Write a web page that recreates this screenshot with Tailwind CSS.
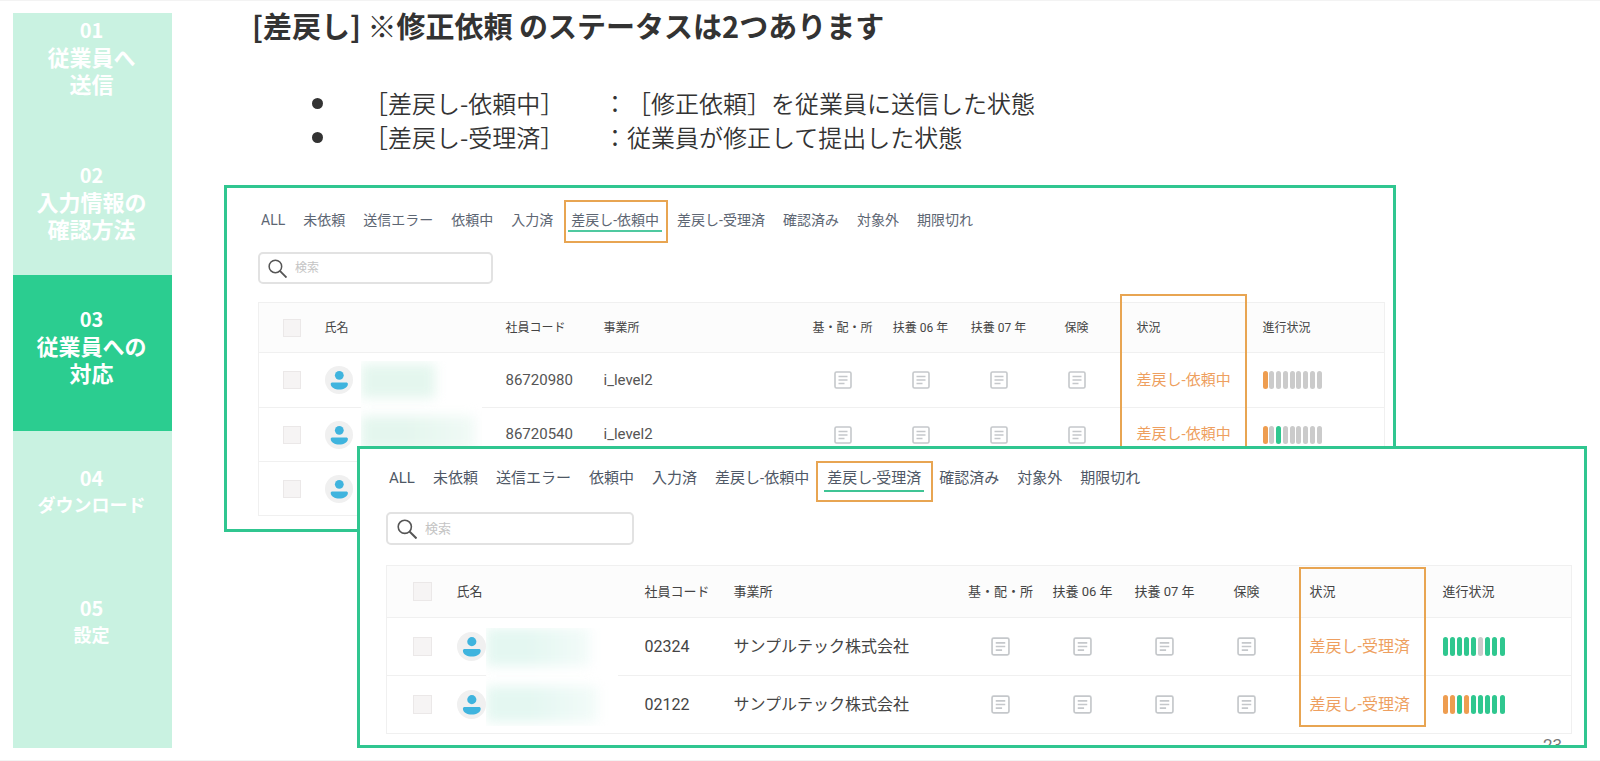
<!DOCTYPE html>
<html lang="ja">
<head>
  <meta charset="UTF-8">
  <meta name="viewport" content="width=device-width, initial-scale=1.0">
  <title>差戻しのステータス</title>
  <script src="https://cdn.jsdelivr.net/npm/@tailwindcss/browser@4"></script>
  <style>
    body { font-family: Roboto, "Noto Sans CJK JP", sans-serif; }
    .jp { font-family: "Noto Sans CJK JP", sans-serif; text-spacing-trim: space-all; }
  </style>
</head>
<body class="bg-white text-[#333]">
  <!-- アイコン定義 -->
  <svg class="hidden">
    <symbol id="doc" viewBox="0 0 18 18">
      <rect x="1" y="1" width="16" height="16" rx="1.5" fill="#fff" stroke="#c5c8cb" stroke-width="1.6"/>
      <path d="M4.5 5.5h9M4.5 9h9M4.5 12.5h6" stroke="#c5c8cb" stroke-width="1.6" fill="none"/>
    </symbol>
    <symbol id="user" viewBox="0 0 28 28">
      <circle cx="14" cy="14" r="14" fill="#f0f0f0"/>
      <circle cx="14.3" cy="9.3" r="4.4" fill="#3fb4de"/>
      <path d="M5.7 18c0-1 .7-1.500 1.800-1.500h13.600c1.100 0 1.800.5 1.800 1.500 0 3.400-4.200 5.600-8.600 5.600s-8.600-2.200-8.600-5.600z" fill="#3fb4de"/>
    </symbol>
    <symbol id="search" viewBox="0 0 20 20">
      <circle cx="7.800" cy="7.800" r="6.600" fill="none" stroke="#555" stroke-width="1.600"/>
      <path d="M12.500 12.500l7 7" stroke="#555" stroke-width="2" fill="none"/>
    </symbol>
  </svg>

  <div class="flex min-h-screen border-y border-[#f3f3f3] pt-3 pr-[13px] pb-3 pl-[13px]">
    <nav class="jp flex w-[159px] shrink-0 flex-col bg-[#c9f2e1] text-center text-[22px] leading-[27px] font-bold text-white">
      <a href="#s1" class="block h-[142px] pt-[3px] pr-[2px]"><span class="block text-[20px]">01</span>従業員へ<br>送信</a>
      <a href="#s2" class="block h-[120px] pt-[6px] pr-[2px]"><span class="block text-[20px]">02</span>入力情報の<br>確認方法</a>
      <a href="#s3" class="block h-[156px] bg-[#2bcd90] pt-[30px] pr-[2px]"><span class="block text-[20px]">03</span>従業員への<br>対応</a>
      <a href="#s4" class="block h-[130px] pt-[34px] pr-[2px] text-[18px] leading-[26px]"><span class="block text-[20px]">04</span>ダウンロード</a>
      <a href="#s5" class="block flex-1 pt-[34px] pr-[2px] text-[18px] leading-[26px]"><span class="block text-[20px]">05</span>設定</a>
    </nav>

    <main class="min-w-0 flex-1 pl-[52px]">
      <h1 class="jp pl-7 text-[29px] leading-[25px] font-bold">[差戻し] ※修正依頼 のステータスは2つあります</h1>
      <ul class="jp mt-[48px] pl-[88px] text-[24px] leading-[34px] font-[350] text-[#333]">
        <li class="flex items-center"><span class="mr-[41px] size-[11px] rounded-full bg-[#333]"></span><span class="w-[239px]">［差戻し-依頼中］</span><span>：［修正依頼］を従業員に送信した状態</span></li>
        <li class="flex items-center"><span class="mr-[41px] size-[11px] rounded-full bg-[#333]"></span><span class="w-[239px]">［差戻し-受理済］</span><span>：従業員が修正して提出した状態</span></li>
      </ul>

      <!-- 差戻し-依頼中 -->
      <section class="mt-[31px] mr-[191px] border-3 border-[#30c690] bg-white pt-[22px] pr-[8px] pb-[13px] pl-[31px]">
        <div class="flex gap-[18px] pl-[3px] text-[14px] leading-[20px] whitespace-nowrap text-[#5d6673]">
          <button>ALL</button>
          <button>未依頼</button>
          <button>送信エラー</button>
          <button>依頼中</button>
          <button>入力済</button>
          <button class="relative">差戻し-依頼中
            <span class="absolute -inset-x-[3px] top-[20px] h-[2px] bg-[#4fc9a0]"></span>
            <span class="absolute -top-[10px] -right-[9px] -bottom-[13px] -left-[7px] border-2 border-[#e8a552]"></span>
          </button>
          <button>差戻し-受理済</button>
          <button>確認済み</button>
          <button>対象外</button>
          <button>期限切れ</button>
        </div>
        <label class="mt-[22px] flex h-[32px] w-[235px] items-center gap-2 rounded-[5px] border-2 border-[#e2e2e2] px-2">
          <svg class="size-[19px] shrink-0"><use href="#search"/></svg>
          <input type="text" placeholder="検索" aria-label="検索" class="w-full min-w-0 text-[12px] outline-none placeholder:text-[#c4c4c4]">
        </label>
        <table class="mt-[18px] w-full table-fixed border border-[#f0f0f0] text-left text-[15px] text-[#555]">
          <colgroup>
            <col class="w-[66px]"><col class="w-[181px]"><col class="w-[98px]"><col>
            <col class="w-[78px]"><col class="w-[78px]"><col class="w-[78px]"><col class="w-[78px]">
            <col class="w-[147px]"><col class="w-[122px]">
          </colgroup>
          <thead class="bg-[#fcfcfc] text-[12px] whitespace-nowrap text-[#444]">
            <tr class="h-[50px]">
              <th class="pl-6"><input type="checkbox" aria-label="すべて選択" class="block size-[18px] appearance-none border border-[#ebe8e8] bg-[#f6f4f4]"></th>
              <th class="font-normal">氏名</th>
              <th class="font-normal">社員コード</th>
              <th class="font-normal">事業所</th>
              <th class="text-center font-normal">基・配・所</th>
              <th class="text-center font-normal">扶養 06 年</th>
              <th class="text-center font-normal">扶養 07 年</th>
              <th class="text-center font-normal">保険</th>
              <th class="relative pl-[21px] font-normal">状況
                <span class="absolute -top-[9px] left-[4px] h-[200px] w-[127px] border-2 border-[#e8a552]"></span>
              </th>
              <th class="font-normal">進行状況</th>
            </tr>
          </thead>
          <tbody>
            <tr class="h-[55px] border-t border-[#f0f0f0]">
              <td class="pl-6"><input type="checkbox" aria-label="86720980" class="block size-[18px] appearance-none border border-[#ebe8e8] bg-[#f6f4f4]"></td>
              <td class="relative">
                <svg class="size-[28px]"><use href="#user"/></svg>
                <!-- 氏名のマスク -->
                <div class="absolute top-[8px] left-[36px] h-[86px] w-[121px] overflow-hidden bg-white">
                  <div class="mt-[3px] h-[34px] w-[74px] bg-[#e4f6ee] blur-[6px]"></div>
                  <div class="mt-[18px] h-[34px] w-[114px] bg-linear-to-r from-[#e4f6ee] from-40% to-[#f1faf6] blur-[6px]"></div>
                </div>
              </td>
              <td>86720980</td>
              <td>i_level2</td>
              <td><svg class="mx-auto size-[18px]"><use href="#doc"/></svg></td>
              <td><svg class="mx-auto size-[18px]"><use href="#doc"/></svg></td>
              <td><svg class="mx-auto size-[18px]"><use href="#doc"/></svg></td>
              <td><svg class="mx-auto size-[18px]"><use href="#doc"/></svg></td>
              <td class="pl-[21px] text-[#ee9f60]">差戻し-依頼中</td>
              <td><div class="flex h-[18px] w-[59px] justify-between" data-steps="o--------"></div></td>
            </tr>
            <tr class="h-[54px] border-t border-[#f0f0f0]">
              <td class="pl-6"><input type="checkbox" aria-label="86720540" class="block size-[18px] appearance-none border border-[#ebe8e8] bg-[#f6f4f4]"></td>
              <td><svg class="size-[28px]"><use href="#user"/></svg></td>
              <td>86720540</td>
              <td>i_level2</td>
              <td><svg class="mx-auto size-[18px]"><use href="#doc"/></svg></td>
              <td><svg class="mx-auto size-[18px]"><use href="#doc"/></svg></td>
              <td><svg class="mx-auto size-[18px]"><use href="#doc"/></svg></td>
              <td><svg class="mx-auto size-[18px]"><use href="#doc"/></svg></td>
              <td class="pl-[21px] text-[#ee9f60]">差戻し-依頼中</td>
              <td><div class="flex h-[18px] w-[59px] justify-between" data-steps="o-g------"></div></td>
            </tr>
            <tr class="h-[54px] border-t border-[#f0f0f0]">
              <td class="pl-6"><input type="checkbox" aria-label="3行目" class="block size-[18px] appearance-none border border-[#ebe8e8] bg-[#f6f4f4]"></td>
              <td><svg class="size-[28px]"><use href="#user"/></svg></td>
              <td colspan="8"></td>
            </tr>
          </tbody>
        </table>
      </section>

      <!-- 差戻し-受理済 (上のパネルに重ねる) -->
      <section class="relative z-10 -mt-[86px] ml-[133px] border-3 border-[#30c690] bg-white pt-[19px] pr-[12px] pb-[11px] pl-[26px]">
        <div class="flex gap-[18px] pl-[3px] text-[15px] leading-[20px] whitespace-nowrap text-[#4f5866]">
          <button>ALL</button>
          <button>未依頼</button>
          <button>送信エラー</button>
          <button>依頼中</button>
          <button>入力済</button>
          <button>差戻し-依頼中</button>
          <button class="relative">差戻し-受理済
            <span class="absolute -inset-x-[3px] top-[22px] h-[2px] bg-[#3fc495]"></span>
            <span class="absolute -top-[7px] -right-[12px] -bottom-[14px] -left-[11px] border-2 border-[#e8a552]"></span>
          </button>
          <button>確認済み</button>
          <button>対象外</button>
          <button>期限切れ</button>
        </div>
        <label class="mt-[24px] flex h-[33px] w-[248px] items-center gap-2 rounded-[5px] border-2 border-[#e2e2e2] px-[9px]">
          <svg class="size-[20px] shrink-0"><use href="#search"/></svg>
          <input type="text" placeholder="検索" aria-label="検索" class="w-full min-w-0 text-[13px] outline-none placeholder:text-[#c4c4c4]">
        </label>
        <table class="mt-[20px] w-full table-fixed border border-[#f0f0f0] text-left text-[16px] text-[#444]">
          <colgroup>
            <col class="w-[70px]"><col class="w-[188px]"><col class="w-[89px]"><col>
            <col class="w-[82px]"><col class="w-[82px]"><col class="w-[82px]"><col class="w-[82px]">
            <col class="w-[155px]"><col class="w-[129px]">
          </colgroup>
          <thead class="bg-[#fcfcfc] text-[13px] whitespace-nowrap">
            <tr class="h-[52px]">
              <th class="pl-[26px]"><input type="checkbox" aria-label="すべて選択" class="block size-[19px] appearance-none border border-[#ebe8e8] bg-[#f6f4f4]"></th>
              <th class="font-normal">氏名</th>
              <th class="font-normal">社員コード</th>
              <th class="font-normal">事業所</th>
              <th class="text-center font-normal">基・配・所</th>
              <th class="text-center font-normal">扶養 06 年</th>
              <th class="text-center font-normal">扶養 07 年</th>
              <th class="text-center font-normal">保険</th>
              <th class="relative pl-[22px] font-normal">状況
                <span class="absolute top-[1px] left-[11px] h-[160px] w-[127px] border-2 border-[#e8a552]"></span>
              </th>
              <th class="font-normal">進行状況</th>
            </tr>
          </thead>
          <tbody>
            <tr class="h-[58px] border-t border-[#f0f0f0]">
              <td class="pl-[26px]"><input type="checkbox" aria-label="02324" class="block size-[19px] appearance-none border border-[#ebe8e8] bg-[#f6f4f4]"></td>
              <td class="relative">
                <svg class="size-[29px]"><use href="#user"/></svg>
                <!-- 氏名のマスク -->
                <div class="absolute top-[10px] left-[29px] h-[98px] w-[132px] overflow-hidden bg-white">
                  <div class="h-[38px] w-[104px] bg-linear-to-r from-[#e4f7f1] from-40% to-[#f3fbf9] blur-[6px]"></div>
                  <div class="mt-[20px] h-[36px] w-[112px] bg-linear-to-r from-[#e4f7f1] from-40% to-[#f3fbf9] blur-[6px]"></div>
                </div>
              </td>
              <td>02324</td>
              <td>サンプルテック株式会社</td>
              <td><svg class="mx-auto size-[19px]"><use href="#doc"/></svg></td>
              <td><svg class="mx-auto size-[19px]"><use href="#doc"/></svg></td>
              <td><svg class="mx-auto size-[19px]"><use href="#doc"/></svg></td>
              <td><svg class="mx-auto size-[19px]"><use href="#doc"/></svg></td>
              <td class="pl-[22px] text-[#ee9f60]">差戻し-受理済</td>
              <td><div class="flex h-[19px] w-[62px] justify-between" data-steps="ggggg-ggg"></div></td>
            </tr>
            <tr class="h-[58px] border-t border-[#f0f0f0]">
              <td class="pl-[26px]"><input type="checkbox" aria-label="02122" class="block size-[19px] appearance-none border border-[#ebe8e8] bg-[#f6f4f4]"></td>
              <td><svg class="size-[29px]"><use href="#user"/></svg></td>
              <td>02122</td>
              <td>サンプルテック株式会社</td>
              <td><svg class="mx-auto size-[19px]"><use href="#doc"/></svg></td>
              <td><svg class="mx-auto size-[19px]"><use href="#doc"/></svg></td>
              <td><svg class="mx-auto size-[19px]"><use href="#doc"/></svg></td>
              <td><svg class="mx-auto size-[19px]"><use href="#doc"/></svg></td>
              <td class="pl-[22px] text-[#ee9f60]">差戻し-受理済</td>
              <td><div class="flex h-[19px] w-[62px] justify-between" data-steps="oogoggggg"></div></td>
            </tr>
          </tbody>
        </table>
        <!-- ページ番号 -->
        <span class="absolute right-[22px] bottom-0 h-[8px] overflow-hidden text-[17px] leading-[16px] text-[#777]">23</span>
      </section>
    </main>
  </div>

  <script>
    // 進行状況バー: o=差戻し g=完了 -=未着手
    const stepClass = {
      'o': 'w-[5px] rounded-full bg-[#ee9d50]',
      'g': 'w-[5px] rounded-full bg-[#2fc78f]',
      '-': 'w-[5px] rounded-full bg-[#cbcbcb]'
    };
    document.querySelectorAll('[data-steps]').forEach(el => {
      for (const s of el.dataset.steps) {
        const bar = document.createElement('span');
        bar.className = stepClass[s];
        el.appendChild(bar);
      }
    });
  </script>
</body>
</html>
